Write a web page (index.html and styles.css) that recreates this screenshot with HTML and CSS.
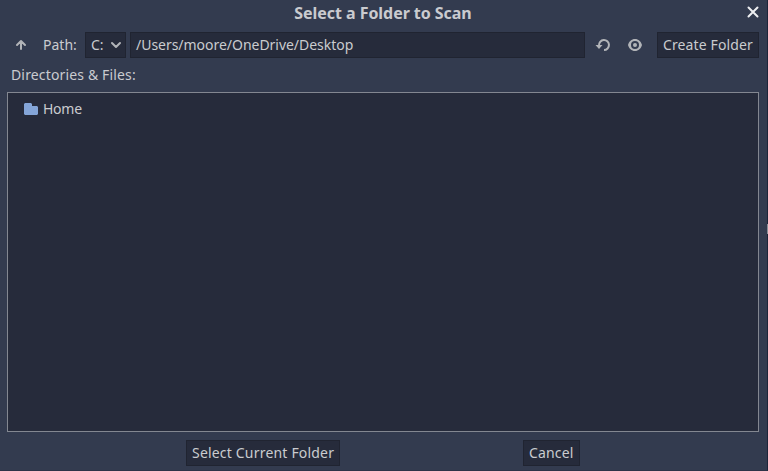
FILE: index.html
```
<!DOCTYPE html>
<html lang="en">
<head>
<meta charset="utf-8">
<title>Select a Folder to Scan</title>
<link rel="stylesheet" href="styles.css">
</head>
<body>
<main class="dialog">
  <header class="titlebar">
    <h1 class="title">Select a Folder to Scan</h1>
    <button class="close" aria-label="Close"><svg width="12" height="12" viewBox="0 0 12 12"><path d="M1.500 1.500l9 9M10.500 1.500l-9 9" stroke="#eeeff2" stroke-width="2" stroke-linecap="round"/></svg></button>
  </header>
  <div class="toolbar">
    <button class="icon up" aria-label="Up"><svg width="16" height="16" viewBox="0 0 16 16"><path d="M8 12V4.500M4 8l4-4 4 4" class="stroke round"/></svg></button>
    <span class="label">Path:</span>
    <button class="box drive"><span>C:</span><svg width="12" height="8" viewBox="0 0 12 8"><path d="M2 2l4 4 4-4" class="stroke round"/></svg></button>
    <div class="box path">/Users/moore/OneDrive/Desktop</div>
    <button class="icon refresh" aria-label="Refresh"><svg width="16" height="16" viewBox="0 0 16 16"><path d="M4 8.500A5 5 0 1 1 9 13" class="stroke"/><path d="M.5 8h7L4 12z" class="solid"/></svg></button>
    <button class="icon eye" aria-label="Show hidden files"><svg width="16" height="16" viewBox="0 0 16 16"><path class="solid" fill-rule="evenodd" d="M8 2C4.500 2 2 4.500 1 8c1 3.500 3.500 6 7 6s6-2.500 7-6c-1-3.500-3.500-6-7-6zM8 4a4 4 0 1 1 0 8 4 4 0 0 1 0-8z"/><circle cx="8" cy="8" r="2" class="solid"/></svg></button>
    <button class="box create">Create Folder</button>
  </div>
  <h2 class="section">Directories &amp; Files:</h2>
  <div class="list">
    <div class="item"><svg width="14" height="12" viewBox="0 0 14 12"><path d="M1 0h6l1 1v2h5l1 1v7l-1 1H1l-1-1V1z" fill="#84a5d8"/></svg><span>Home</span></div>
  </div>
  <footer class="actions">
    <button class="box select">Select Current Folder</button>
    <button class="box cancel">Cancel</button>
  </footer>
  <span class="grip"></span>
</main>
</body>
</html>
```
FILE: styles.css
```
* { box-sizing: border-box; }
body {
  margin: 0;
  background: #333b4f;
  color: #cacbcf;
  font: 14px/20px "Noto Sans", sans-serif;
}
button {
  margin: 0;
  padding: 0;
  border: 0;
  background: none;
  color: inherit;
  font: inherit;
}
svg { display: block; fill: none; flex: none; }
.stroke { stroke: #b2b4b8; stroke-width: 2; fill: none; }
.solid { fill: #b2b4b8; }
.round { stroke-linecap: round; stroke-linejoin: round; }
.dialog {
  position: relative;
  display: flex;
  flex-direction: column;
  width: 768px;
  height: 471px;
  padding: 0 8px 4px 7px;
  border-right: 1px solid #1d2539;
  border-bottom: 1px solid #2d3448;
}
.grip {
  position: absolute;
  top: 224px;
  right: -1px;
  width: 1px;
  height: 10px;
  background: #8b8f98;
}
.titlebar {
  display: grid;
  grid-template-columns: 1fr auto 1fr;
  height: 32px;
}
.title {
  grid-column: 2;
  margin: 3px 0 0;
  font-size: 16px;
  line-height: 20px;
  font-weight: 700;
  letter-spacing: -0.05px;
}
.close { justify-self: end; align-self: start; margin-top: 6px; }
.toolbar { display: flex; align-items: center; height: 26px; }
.box {
  display: flex;
  align-items: center;
  height: 26px;
  padding: 0 5px;
  border: 1px solid #202431;
  background: #262b3b;
  white-space: nowrap;
}
.up { margin-left: 6px; }
.label { width: 42px; margin-left: 14px; }
.drive { width: 41px; gap: 6px; }
.path { width: 455px; margin-left: 4px; letter-spacing: -0.03px; }
.refresh { margin-left: 10px; }
.eye { margin-left: 16px; }
.create { width: 102px; margin-left: auto; letter-spacing: 0.12px; }
.section {
  margin: 7px 0 7px 4px;
  font-size: 14px;
  line-height: 20px;
  font-weight: 400;
  letter-spacing: 0.15px;
}
.list {
  height: 340px;
  padding: 6px 16px;
  border: 1px solid #838791;
  background: #262b3b;
}
.item { display: flex; align-items: center; gap: 5px; letter-spacing: -0.25px; }
.actions { display: flex; gap: 183px; margin: 8px 0 0 179px; }
.select { width: 154px; letter-spacing: 0.19px; }
.cancel { width: 57px; letter-spacing: 0.15px; }
```
